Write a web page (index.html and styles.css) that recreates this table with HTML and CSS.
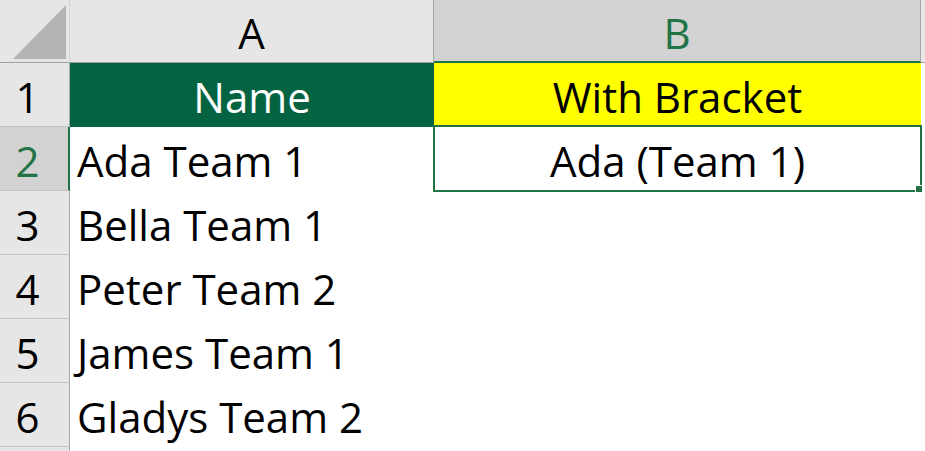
FILE: index.html
```html
<!DOCTYPE html>
<html>
<head>
<meta charset="utf-8">
<link rel="stylesheet" href="styles.css">
</head>
<body>
<div class="sheet">
  <div class="corner"><svg class="tri" width="70" height="63" viewBox="0 0 70 63"><polygon points="13,59 66,59 66,5" fill="#b4b4b4"/></svg></div>
  <div class="colhead">A</div>
  <div class="colhead sel">B</div>
  <div class="colhead rest"></div>

  <div class="rowhead">1</div>
  <div class="cell name center">Name</div>
  <div class="cell bracket center">With Bracket</div>
  <div class="cell"></div>

  <div class="rowhead sel">2</div>
  <div class="cell">Ada Team 1</div>
  <div class="cell center active">Ada (Team 1)</div>
  <div class="cell"></div>

  <div class="rowhead">3</div>
  <div class="cell">Bella Team 1</div>
  <div class="cell"></div>
  <div class="cell"></div>

  <div class="rowhead">4</div>
  <div class="cell">Peter Team 2</div>
  <div class="cell"></div>
  <div class="cell"></div>

  <div class="rowhead">5</div>
  <div class="cell">James Team 1</div>
  <div class="cell"></div>
  <div class="cell"></div>

  <div class="rowhead">6</div>
  <div class="cell">Gladys Team 2</div>
  <div class="cell"></div>
  <div class="cell"></div>

  <div class="rowhead last"></div>
  <div class="cell"></div>
  <div class="cell"></div>
  <div class="cell"></div>
</div>
</body>
</html>
```

FILE: styles.css
```css
html, body {
  margin: 0;
  padding: 0;
  background: #ffffff;
  overflow: hidden;
}

.sheet {
  display: grid;
  grid-template-columns: 70px 364px 487px 1fr;
  grid-template-rows: 63px repeat(6, 64px) 4px;
  width: 925px;
  height: 451px;
  overflow: hidden;
  font-family: "Open Sans", "Noto Sans", sans-serif;
  font-size: 42px;
  line-height: 56px;
  color: #000000;
}

.corner {
  background: #e6e6e6;
  border-right: 1px solid #d4d4d4;
  border-bottom: 1px solid #a0a0a0;
  box-sizing: border-box;
}

.tri {
  display: block;
}

.colhead {
  background: #e6e6e6;
  border-right: 1px solid #a8a8a8;
  border-bottom: 1px solid #a0a0a0;
  box-sizing: border-box;
  display: flex;
  align-items: center;
  justify-content: center;
  padding-top: 4px;
}

.colhead.sel {
  background: #d2d2d2;
  color: #217346;
  border-bottom: 2px solid #217346;
  padding-top: 5px;
}

.colhead.rest {
  border-right: none;
}

.rowhead {
  background: #e6e6e6;
  border-right: 1px solid #ababab;
  border-bottom: 1px solid #c4c4c4;
  box-sizing: border-box;
  display: flex;
  align-items: center;
  justify-content: center;
  padding: 4px 14px 0 0;
}

.rowhead.sel {
  background: #d2d2d2;
  color: #217346;
  border-right: 2px solid #217346;
  padding-right: 13px;
}

.rowhead.last {
  border-bottom: none;
}

.cell {
  display: flex;
  align-items: center;
  padding: 4px 0 0 7px;
  white-space: nowrap;
  position: relative;
}

.cell.center {
  justify-content: center;
  padding-left: 0;
}

.name {
  background: #046341;
  color: #ffffff;
}

.bracket {
  background: #ffff00;
}

.active::after {
  content: "";
  position: absolute;
  left: -1px;
  right: -1px;
  top: -2px;
  bottom: -1px;
  border: 2px solid #217346;
}

.active::before {
  content: "";
  position: absolute;
  width: 6px;
  height: 6px;
  right: -2px;
  bottom: -2px;
  background: #217346;
  border: 1px solid #ffffff;
  z-index: 2;
}
```
